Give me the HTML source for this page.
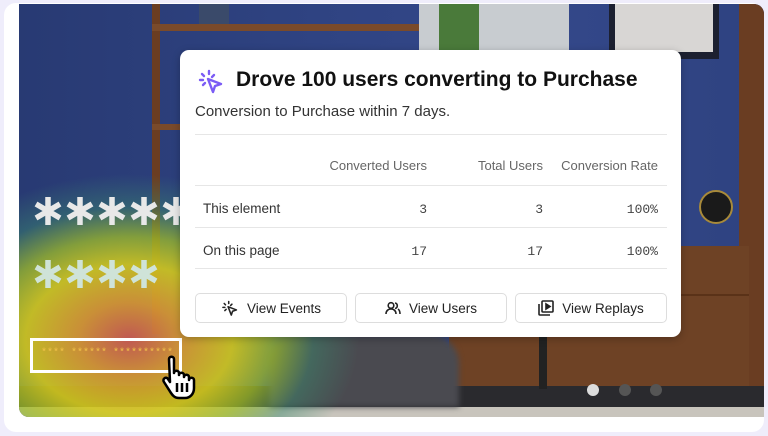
<!DOCTYPE html>
<html><head><meta charset="utf-8"><style>
*{box-sizing:border-box;margin:0;padding:0}
body{width:768px;height:436px;background:#efedfb;font-family:"Liberation Sans",sans-serif;overflow:hidden;position:relative}
.card{position:absolute;left:4px;top:3px;width:760px;height:429px;background:#fff;border-radius:12px}
.img{position:absolute;left:19px;top:4px;width:745px;height:413px;border-radius:0 10px 0 10px;overflow:hidden;background:#2c3d78}
.abs{position:absolute}
.pop{position:absolute;left:180px;top:50px;width:501px;height:287px;background:#fff;border-radius:9px;box-shadow:0 2px 8px rgba(0,0,0,.25)}
.t{position:absolute;white-space:nowrap}
.hr{position:absolute;left:15px;width:472px;height:1px;background:#e6e6e6}
.btn{position:absolute;top:243px;height:30px;width:152px;border:1px solid #ddd;border-radius:5px;font-size:13.5px;color:#222;display:flex;align-items:center;justify-content:center;gap:8px}
.mono{font-family:"Liberation Mono",monospace;font-size:13px;color:#444}
.hd{font-size:13px;color:#666}
</style></head><body>
<div class="card"></div>
<div class="img">
  <div class="abs" style="left:0;top:0;width:745px;height:413px;background:linear-gradient(90deg,#283a73 0%,#2f4382 40%,#34488a 70%,#2e4280 100%)"></div>
  <div class="abs" style="left:133px;top:0;width:8px;height:330px;background:#6b3d22"></div>
  <div class="abs" style="left:133px;top:20px;width:300px;height:7px;background:#7a4a2a"></div>
  <div class="abs" style="left:180px;top:0;width:30px;height:20px;background:#3a4a6a"></div>
  <div class="abs" style="left:133px;top:120px;width:40px;height:6px;background:#7a4a2a"></div>
  <div class="abs" style="left:400px;top:0;width:150px;height:50px;background:#c8ccd0"></div>
  <div class="abs" style="left:420px;top:0;width:40px;height:50px;background:#4a7a3a"></div>
  <div class="abs" style="left:590px;top:0;width:110px;height:55px;background:#1c2030"></div>
  <div class="abs" style="left:596px;top:0;width:98px;height:48px;background:#d8d6d4"></div>
  <div class="abs" style="left:720px;top:0;width:25px;height:413px;background:#6a3d22"></div>
  <div class="abs" style="left:680px;top:186px;width:34px;height:34px;border-radius:50%;background:#1a1a1a;border:2px solid #a88a3a"></div>
  <div class="abs" style="left:430px;top:242px;width:300px;height:140px;background:#6e4225"></div>
  <div class="abs" style="left:430px;top:290px;width:300px;height:2px;background:#5a3218"></div>
  <div class="abs" style="left:0;top:382px;width:745px;height:21px;background:#2a2a2e"></div>
  <div class="abs" style="left:0;top:403px;width:745px;height:10px;background:#c8c4bc"></div>
  <div class="abs" style="left:250px;top:330px;width:190px;height:73px;background:#4a4a50;border-radius:30px 30px 0 0;filter:blur(3px)"></div>
  <div class="abs" style="left:520px;top:330px;width:8px;height:55px;background:#222"></div>
  <div class="abs" style="left:-120px;top:170px;width:460px;height:330px;background:radial-gradient(closest-side,rgba(200,90,80,.95) 0%,rgba(215,150,50,.92) 22%,rgba(210,200,30,.9) 45%,rgba(160,190,40,.75) 62%,rgba(60,140,110,.45) 80%,rgba(40,80,110,0) 100%)"></div>
  <svg class="abs" style="left:0;top:170px" width="180" height="120" stroke="#e8e8e8" stroke-width="5.5" stroke-linecap="butt">
    <g id="a"><path d="M29 23v28M17 30l24 14M17 44l24-14"/></g>
    <use href="#a" x="32"/><use href="#a" x="64"/><use href="#a" x="96"/><use href="#a" x="128"/>
    <g stroke="#cfe3d8"><use href="#a" y="63"/><use href="#a" x="32" y="63"/><use href="#a" x="64" y="63"/><use href="#a" x="96" y="63"/></g>
  </svg>
  <div class="abs" style="left:11px;top:334px;width:152px;height:35px;border:3px solid #fff"></div>
  <div class="abs" style="left:22px;top:344px;font-size:10px;color:#f1c24a;font-family:'Liberation Mono',monospace">**** ****** **********</div>
  <div class="abs" style="left:568px;top:380px;width:12px;height:12px;border-radius:50%;background:#ddd"></div>
  <div class="abs" style="left:600px;top:380px;width:12px;height:12px;border-radius:50%;background:#555"></div>
  <div class="abs" style="left:631px;top:380px;width:12px;height:12px;border-radius:50%;background:#555"></div>
</div>
<svg class="abs" style="left:160px;top:355px" width="42" height="46" viewBox="0 0 42 46">
<path d="M9 4c0-3 5-3 5 0v14c0-3 5-3 5 0v2c0-3 5-3 5 0v2c0-3 5-3 5 0v3c0-3 5-3 5 0v8c0 6-4 10-9 10h-6c-4 0-6-2-8-5L4 27c-2-3 2-6 4-3l2 3z" fill="#fff" stroke="#000" stroke-width="2.5" stroke-linejoin="round"/>
<path d="M17 28v9M22 28v9M27 28v9" stroke="#000" stroke-width="2.5"/>
</svg>
<div class="pop">
  <svg class="abs" style="left:17px;top:17px" width="28" height="28" viewBox="0 0 28 28" fill="none" stroke="#7b5cf5" stroke-width="2.4" stroke-linecap="round">
    <path d="M12 4v3M5 7l2 2M3 13h3M6 18l2-2M17 8l-2 2"/>
    <path d="M11 12l13 5-6 2-2 6z" stroke-linejoin="round"/>
  </svg>
  <div class="t" style="left:56px;top:18px;font-size:21px;font-weight:bold;color:#111">Drove 100 users converting to Purchase</div>
  <div class="t" style="left:15px;top:53px;font-size:15px;color:#333">Conversion to Purchase within 7 days.</div>
  <div class="hr" style="top:84px"></div>
  <div class="t hd" style="right:254px;top:108px">Converted Users</div>
  <div class="t hd" style="right:138px;top:108px">Total Users</div>
  <div class="t hd" style="right:23px;top:108px">Conversion Rate</div>
  <div class="hr" style="top:135px"></div>
  <div class="t" style="left:23px;top:151px;font-size:13.5px;color:#333">This element</div>
  <div class="t mono" style="right:254px;top:152px">3</div>
  <div class="t mono" style="right:138px;top:152px">3</div>
  <div class="t mono" style="right:23px;top:152px">100%</div>
  <div class="hr" style="top:177px"></div>
  <div class="t" style="left:23px;top:193px;font-size:13.5px;color:#333">On this page</div>
  <div class="t mono" style="right:254px;top:194px">17</div>
  <div class="t mono" style="right:138px;top:194px">17</div>
  <div class="t mono" style="right:23px;top:194px">100%</div>
  <div class="hr" style="top:218px"></div>
  <div class="btn" style="left:15px">
    <svg width="18" height="18" viewBox="0 0 28 28" fill="none" stroke="#222" stroke-width="2.4" stroke-linecap="round"><path d="M12 4v3M5 7l2 2M3 13h3M6 18l2-2M17 8l-2 2"/><path d="M11 12l13 5-6 2-2 6z" stroke-linejoin="round"/></svg>View Events</div>
  <div class="btn" style="left:175px">
    <svg width="16" height="14" viewBox="0 0 16 14" fill="none" stroke="#222" stroke-width="1.6"><circle cx="6" cy="4.5" r="2.8"/><path d="M1 13c0-3 2-5 5-5s5 2 5 5M10 2a2.8 2.8 0 010 5.5M13 8c1.5 1 2 3 2 5"/></svg>View Users</div>
  <div class="btn" style="left:335px">
    <svg width="16" height="16" viewBox="0 0 16 16" fill="none" stroke="#222" stroke-width="1.6"><rect x="4" y="1" width="11" height="11" rx="1"/><path d="M1 4v10a1 1 0 001 1h10"/><path d="M8 4v5l4-2.5z" fill="#222"/></svg>View Replays</div>
</div>
</body></html>
